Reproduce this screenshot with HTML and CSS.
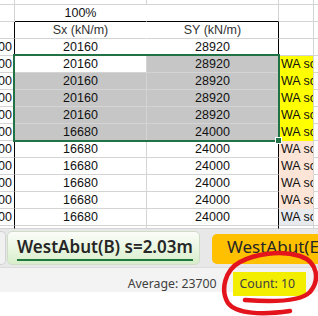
FILE: index.html
```html
<!DOCTYPE html>
<html lang="en">
<head>
    <meta charset="UTF-8">
    <title>Stiffness sheet</title>
    <link rel="stylesheet" href="styles.css">
</head>
<body>
    <div class="sheet">
        <div class="row top">
            <div class="cell c0"></div>
            <div class="cell c1"></div>
            <div class="cell c2"></div>
            <div class="cell c3"></div>
            <div class="cell c4"></div>
        </div>
        <div class="row">
            <div class="cell c0"></div>
            <div class="cell c1 open boxtop">100%</div>
            <div class="cell c2 boxtop"></div>
            <div class="cell c3"></div>
            <div class="cell c4"></div>
        </div>
        <div class="row">
            <div class="cell c0 edge"></div>
            <div class="cell c1 open head">Sx (kN/m)</div>
            <div class="cell c2 edge head">SY (kN/m)</div>
            <div class="cell c3"></div>
            <div class="cell c4"></div>
        </div>
        <div class="row">
            <div class="cell c0 edge">8000</div>
            <div class="cell c1 open">20160</div>
            <div class="cell c2 edge">28920</div>
            <div class="cell c3"></div>
            <div class="cell c4"></div>
        </div>
        <!-- selected block -->
        <div class="row">
            <div class="cell c0 edge">8000</div>
            <div class="cell c1">20160</div>
            <div class="cell c2 edge sel">28920</div>
            <div class="cell c3 yellow">WA scour</div>
            <div class="cell c4"></div>
        </div>
        <div class="row">
            <div class="cell c0 edge">8000</div>
            <div class="cell c1 sel">20160</div>
            <div class="cell c2 edge sel">28920</div>
            <div class="cell c3 yellow">WA scour</div>
            <div class="cell c4"></div>
        </div>
        <div class="row">
            <div class="cell c0 edge">8000</div>
            <div class="cell c1 sel">20160</div>
            <div class="cell c2 edge sel">28920</div>
            <div class="cell c3 yellow">WA scour</div>
            <div class="cell c4"></div>
        </div>
        <div class="row">
            <div class="cell c0 edge">8000</div>
            <div class="cell c1 sel">20160</div>
            <div class="cell c2 edge sel">28920</div>
            <div class="cell c3 yellow">WA scour</div>
            <div class="cell c4"></div>
        </div>
        <div class="row">
            <div class="cell c0 edge">8000</div>
            <div class="cell c1 sel">16680</div>
            <div class="cell c2 edge sel">24000</div>
            <div class="cell c3 yellow">WA scour</div>
            <div class="cell c4"></div>
        </div>
        <!-- rest -->
        <div class="row">
            <div class="cell c0 edge">8000</div>
            <div class="cell c1">16680</div>
            <div class="cell c2 edge">24000</div>
            <div class="cell c3 peach">WA scour</div>
            <div class="cell c4"></div>
        </div>
        <div class="row">
            <div class="cell c0 edge">8000</div>
            <div class="cell c1">16680</div>
            <div class="cell c2 edge">24000</div>
            <div class="cell c3 peach">WA scour</div>
            <div class="cell c4"></div>
        </div>
        <div class="row">
            <div class="cell c0 edge">8000</div>
            <div class="cell c1">16680</div>
            <div class="cell c2 edge">24000</div>
            <div class="cell c3 peach">WA scour</div>
            <div class="cell c4"></div>
        </div>
        <div class="row">
            <div class="cell c0 edge">8000</div>
            <div class="cell c1">16680</div>
            <div class="cell c2 edge">24000</div>
            <div class="cell c3 peach">WA scour</div>
            <div class="cell c4"></div>
        </div>
        <div class="row">
            <div class="cell c0 edge">8000</div>
            <div class="cell c1">16680</div>
            <div class="cell c2 edge">24000</div>
            <div class="cell c3 mist">WA scour</div>
            <div class="cell c4"></div>
        </div>
        <div class="row stub">
            <div class="cell c0 edge"></div>
            <div class="cell c1"></div>
            <div class="cell c2 edge"></div>
            <div class="cell c3"></div>
            <div class="cell c4"></div>
        </div>

        <div class="selection"><div class="handle"></div></div>
    </div>

    <div class="tabs">
        <div class="tab prev"></div>
        <div class="tab active"><span>WestAbut(B) s=2.03m</span></div>
        <div class="tab orange"><span>WestAbut(E) s=2.03m</span></div>
    </div>

    <div class="status">
        <span class="stat">Average: 23700</span>
        <span class="stat count">Count: 10</span>
    </div>

    <svg class="scribble" width="318" height="316" viewBox="0 0 318 316">
        <path d="M245 300 C270 302, 300 302, 310 292 C320 280, 318 262, 300 256 C280 250, 255 254, 240 262 C225 270, 220 290, 228 303 C236 314, 262 315, 290 311"
              fill="none" stroke="#e3141c" stroke-width="4.5" stroke-linecap="round"/>
    </svg>
</body>
</html>
```

FILE: styles.css
```css
* {
    margin: 0;
    padding: 0;
    box-sizing: border-box;
}

body {
    width: 318px;
    height: 316px;
    overflow: hidden;
    position: relative;
    background: #fff;
    font-family: "Liberation Sans", Arial, sans-serif;
}

/* grid */
.sheet {
    position: relative;
    height: 229px;
    overflow: hidden;
}

.row {
    display: flex;
    height: 17px;
}

.row.top {
    height: 5px;
}

.row.stub {
    height: 3px;
}

.cell {
    display: flex;
    align-items: center;
    justify-content: center;
    overflow: hidden;
    white-space: nowrap;
    border-right: 1px solid #d4d4d4;
    border-bottom: 1px solid #d4d4d4;
    font-size: 12.5px;
    color: #111;
}

.c0 {
    width: 15px;
    justify-content: flex-end;
    padding-right: 2px;
}

.c1, .c2 {
    width: 132px;
}

.c3 {
    width: 35px;
    justify-content: flex-start;
    padding-left: 2px;
}

.c4 {
    flex: 1;
    border-right: none;
}

.open {
    border-right-color: #fff;
}

.edge {
    border-right-color: #000;
}

.boxtop {
    border-bottom-color: #000;
}

.head {
    color: #333;
}

.sel {
    background: #c6c6c6;
}

.yellow {
    background: #ffff00;
    border-bottom-color: #ffff00;
}

.peach {
    background: #fce4d6;
    border-bottom-color: #fce4d6;
}

.mist {
    background: #e8ebee;
}

.selection {
    position: absolute;
    left: 13px;
    top: 54px;
    width: 267px;
    height: 88px;
    border: 2px solid #217346;
}

.handle {
    position: absolute;
    right: -4px;
    bottom: -4px;
    width: 7px;
    height: 7px;
    background: #217346;
    border: 1px solid #fff;
}

/* sheet tabs */
.tabs {
    display: flex;
    height: 38px;
    padding-top: 2px;
    background: #e8e8e8;
    font-family: "Noto Sans", sans-serif;
    color: #262626;
    overflow: hidden;
}

.tab {
    height: 34px;
    border-radius: 5px;
    white-space: nowrap;
}

.tab.prev {
    width: 6px;
    background: #f1f1f1;
    border: 1px solid #d2d2d2;
    border-left: none;
    border-radius: 0 5px 5px 0;
}

.tab.active {
    width: 193px;
    margin-left: 1px;
    padding: 3px 0 0 9px;
    background: linear-gradient(#fbfdf9, #d8eeca);
    border: 1px solid #d0dcc8;
}

.tab.active span {
    display: inline-block;
    font-size: 17px;
    font-weight: 600;
    line-height: 24px;
    border-bottom: 2.5px solid #1d7a3c;
}

.tab.orange {
    flex: 1;
    margin: 3px 0 0 12px;
    height: 30px;
    padding: 1px 0 0 15px;
    background: #ffc000;
    border-radius: 5px 0 0 5px;
    font-size: 17px;
    line-height: 24px;
    overflow: hidden;
}

/* status bar */
.status {
    display: flex;
    justify-content: flex-end;
    align-items: flex-start;
    height: 25px;
    padding: 4px 12px 0 0;
    background: #f3f3f3;
    border-top: 1px solid #dcdcdc;
    font-family: "Noto Sans", sans-serif;
    font-size: 12.3px;
    color: #404040;
}

.stat {
    line-height: 24px;
}

.count {
    margin-left: 16px;
    padding: 0 11px 0 7px;
    background: #f3ed00;
}

.scribble {
    position: absolute;
    left: 0;
    top: 0;
    pointer-events: none;
}
```
